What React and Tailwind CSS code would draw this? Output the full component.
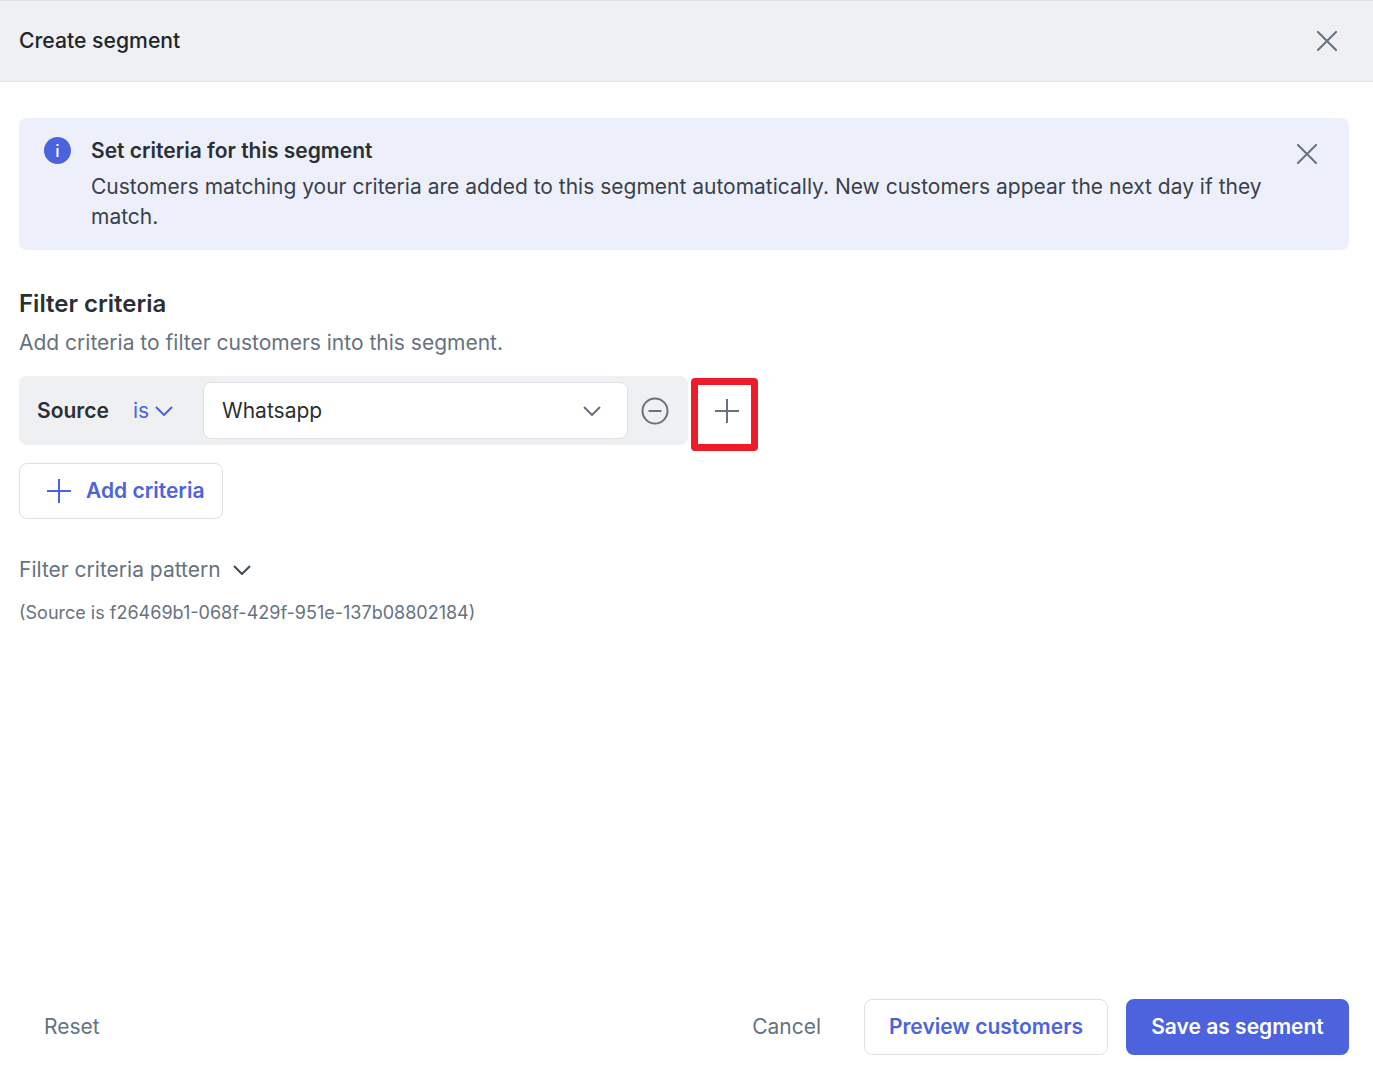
const X = ({ className }) => (
  <svg className={className} width="20" height="20" viewBox="0 0 20 20" fill="none" stroke="#66727f" strokeWidth="2" strokeLinecap="square"><path d="M1 1L19 19M19 1L1 19" /></svg>
);
const Plus = ({ color, size = 26, w = 2 }) => (
  <svg width={size} height={size} viewBox="0 0 26 26" fill="none" stroke={color} strokeWidth={w}><path d="M13 1V25M1 13H25" /></svg>
);
const Chev = ({ color, w = 18, h = 10, sw = 2 }) => (
  <svg width={w} height={h} viewBox="0 0 18 10" fill="none" stroke={color} strokeWidth={sw}><path d="M1 1L9 9L17 1" /></svg>
);

export default function App() {
  return (
    <div className="relative flex h-[1077px] w-[1373px] flex-col bg-white font-['Inter',sans-serif] text-[#2a2f36]">
      <header className="flex h-[82px] shrink-0 items-center justify-between border-y border-[#dfe0e6] bg-[#eff0f2] pl-[19px] pr-[36px]">
        <h1 className="text-[21.2px] font-medium leading-none text-[#22262c]">Create segment</h1>
        <X />
      </header>

      <main className="flex-1 pl-[19px] pr-[24px] pt-[36px]">
        <section className="flex h-[132px] rounded-lg bg-[#edf0fb] pl-[25px] pr-[32px] pt-[19px]">
          <div className="mr-[20px] flex h-[27px] w-[27px] shrink-0 items-center justify-center rounded-full bg-[#4c63dd]">
            <svg width="3" height="13" viewBox="0 0 3 13" fill="#fff"><rect x="0.5" width="2" height="2" /><rect x="0.5" y="4" width="2" height="9" /></svg>
          </div>
          <div className="w-[1180px]">
            <h2 className="text-[21px] font-semibold leading-[28px] text-[#2a2f36]">Set criteria for this segment</h2>
            <p className="mt-[7px] text-[21px] leading-[30px] text-[#3a4049]">Customers matching your criteria are added to this segment automatically. New customers appear the next day if they match.</p>
          </div>
          <X className="ml-auto mt-[7px]" />
        </section>

        <h2 className="mt-[40px] text-[24px] font-semibold leading-[28px] text-[#2a2f36]">Filter criteria</h2>
        <p className="mt-[11px] text-[21px] leading-[28px] text-[#66727f]">Add criteria to filter customers into this segment.</p>

        <div className="mt-[19px] flex items-center">
          <div className="flex h-[69px] w-[669px] items-center rounded-lg bg-[#eff0f2] pl-[18px]">
            <span className="w-[96px] text-[21px] font-semibold text-[#2a2f36]">Source</span>
            <span className="flex w-[70px] items-center">
              <span className="text-[21px] text-[#4c63dd]">is</span>
              <span className="ml-[6px]"><Chev color="#4c63dd" /></span>
            </span>
            <div className="flex h-[57px] w-[425px] items-center justify-between rounded-lg border border-[#dfe0e6] bg-white pl-[18px] pr-[26px]">
              <span className="text-[21px] text-[#2a2f36]">Whatsapp</span>
              <Chev color="#66727f" />
            </div>
            <svg className="ml-[13px]" width="28" height="28" viewBox="0 0 28 28" fill="none" stroke="#66727f" strokeWidth="2"><circle cx="14" cy="14" r="12.5" /><path d="M7.5 14H20.5" /></svg>
          </div>
          <span className="ml-[26px] flex"><Plus color="#66727f" /></span>
        </div>

        <button className="mt-[18px] flex h-[56px] w-[204px] items-center rounded-lg border border-[#dfe0e6] bg-white pl-[26px]">
          <Plus color="#4c63dd" />
          <span className="ml-[14px] text-[21px] font-semibold text-[#4c63dd]">Add criteria</span>
        </button>

        <div className="mt-[37px] flex items-center">
          <span className="text-[21px] leading-[28px] text-[#66727f]">Filter criteria pattern</span>
          <span className="ml-[12px]"><Chev color="#3f4a56" /></span>
        </div>
        <p className="mt-[15px] text-[18px] leading-[28px] text-[#66727f]">(Source is f26469b1-068f-429f-951e-137b08802184)</p>
      </main>

      <footer className="flex h-[78px] shrink-0 items-start pl-[44px] pr-[24px]">
        <button className="mt-[12px] text-[21px] text-[#66727f]">Reset</button>
        <button className="ml-auto mt-[12px] text-[21px] text-[#66727f]">Cancel</button>
        <button className="ml-[43px] h-[56px] w-[244px] rounded-lg border border-[#dfe0e6] bg-white text-[21px] font-semibold text-[#4c63dd]">Preview customers</button>
        <button className="ml-[18px] h-[56px] w-[223px] rounded-lg bg-[#4c63dd] text-[21px] font-semibold text-white">Save as segment</button>
      </footer>

      <div className="absolute left-[691px] top-[378px] h-[73px] w-[67px] rounded-[4px] border-[7px] border-[#ee1c2b]" />
    </div>
  );
}
